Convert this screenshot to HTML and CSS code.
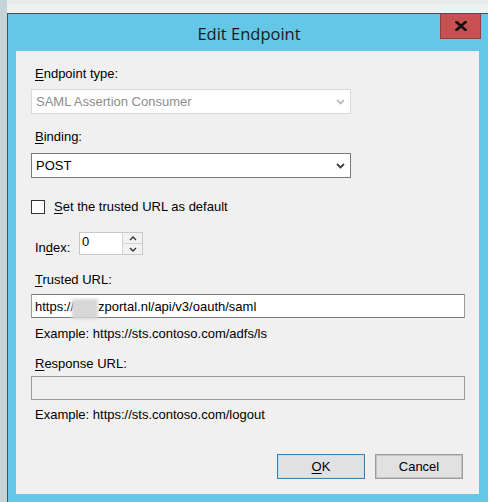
FILE: index.html
```html
<!DOCTYPE html>
<html lang="en">
<head>
<meta charset="utf-8">
<title>Edit Endpoint</title>
<link rel="stylesheet" href="styles.css">
</head>
<body>
<div class="desk">
  <div class="desk-edge"></div>
  <div class="desk-main">
    <div class="desk-top"></div>
    <div class="window">
      <div class="titlebar">
        <span class="title">Edit Endpoint</span>
        <button class="close" aria-label="Close">
          <svg width="12" height="10" viewBox="0 0 12 10"><path d="M1.5 1 L10.5 9 M10.5 1 L1.5 9" stroke="#111" stroke-width="2.6" stroke-linecap="square" fill="none"/></svg>
        </button>
      </div>
      <div class="client">
        <div class="label first"><u>E</u>ndpoint type:</div>
        <div class="combo disabled">
          <span class="combo-text">SAML Assertion Consumer</span>
          <svg class="chev" width="9" height="6" viewBox="0 0 9 6"><path d="M1 1 L4.5 4.5 L8 1" stroke="#b4b4b4" stroke-width="1.6" fill="none"/></svg>
        </div>
        <div class="label second"><u>B</u>inding:</div>
        <div class="combo">
          <span class="combo-text">POST</span>
          <svg class="chev" width="9" height="6" viewBox="0 0 9 6"><path d="M1 1 L4.5 4.5 L8 1" stroke="#404040" stroke-width="1.8" fill="none"/></svg>
        </div>
        <div class="check-row">
          <span class="check-box"></span>
          <span class="check-text"><u>S</u>et the trusted URL as default</span>
        </div>
        <div class="index-row">
          <span class="index-label">In<u>d</u>ex:</span>
          <div class="spin">
            <span class="spin-value">0</span>
            <div class="spin-btns">
              <span class="spin-btn"><svg width="8" height="5" viewBox="0 0 8 5"><path d="M1 4 L4 1 L7 4" stroke="#333" stroke-width="1.4" fill="none"/></svg></span>
              <span class="spin-btn"><svg width="8" height="5" viewBox="0 0 8 5"><path d="M1 1 L4 4 L7 1" stroke="#333" stroke-width="1.4" fill="none"/></svg></span>
            </div>
          </div>
        </div>
        <div class="label trusted"><u>T</u>rusted URL:</div>
        <div class="textbox">https://<span class="redact"></span>zportal.nl/api/v3/oauth/saml</div>
        <div class="hint">Example: https://sts.contoso.com/adfs/ls</div>
        <div class="label response"><u>R</u>esponse URL:</div>
        <div class="textbox disabled"></div>
        <div class="hint last">Example: https://sts.contoso.com/logout</div>
        <div class="buttons">
          <button class="btn default"><u>O</u>K</button>
          <button class="btn">Cancel</button>
        </div>
      </div>
    </div>
  </div>
</div>
</body>
</html>
```

FILE: styles.css
```css
* { box-sizing: border-box; }

html, body {
  margin: 0;
  padding: 0;
}

body {
  width: 488px;
  height: 502px;
  overflow: hidden;
  font-family: "Liberation Sans", Arial, sans-serif;
  font-size: 13px;
  color: #000;
}

u { text-decoration: underline; text-underline-offset: 2px; text-decoration-thickness: 1px; }

/* desktop strips around the dialog */
.desk {
  display: flex;
  height: 502px;
}

.desk-edge {
  width: 7px;
  background: #c6d3d7;
  flex: none;
}

.desk-main {
  flex: 1;
  display: flex;
  flex-direction: column;
  min-width: 0;
}

.desk-top {
  height: 13px;
  flex: none;
  background: #eff1f1;
  border-top: 4px solid #e8ebeb;
}

/* dialog frame */
.window {
  flex: 1;
  min-height: 0;
  display: flex;
  flex-direction: column;
  background: #64c7e8;
  border-top: 1px solid #46535b;
  border-left: 1px solid #46535b;
}

.titlebar {
  position: relative;
  height: 37px;
  flex: none;
  display: flex;
  align-items: center;
  justify-content: center;
  padding-left: 2px;
}

.title {
  font-family: "Open Sans", "Noto Sans", sans-serif;
  font-size: 16.5px;
  color: #1a1a1a;
  margin-top: 1px;
}

.close {
  position: absolute;
  top: 0;
  right: 7px;
  width: 41px;
  height: 25px;
  margin: 0;
  padding: 0;
  background: #c75050;
  border: 1px solid #8e4040;
  border-top: none;
  display: flex;
  align-items: center;
  justify-content: center;
}

/* client area */
.client {
  flex: 1;
  min-height: 0;
  overflow: hidden;
  margin: 0 9px 8px 8px;
  background: #f0f0f0;
  padding: 15px 14px 0 15px;
  display: flex;
  flex-direction: column;
  align-items: flex-start;
}

.label {
  line-height: 15px;
  padding-left: 4px;
}

.label.first { margin-bottom: 8px; }
.label.second { margin-top: 15px; margin-bottom: 9px; }
.label.trusted { margin-top: 17px; margin-bottom: 7px; }
.label.response { margin-top: 15px; margin-bottom: 5px; }

.combo {
  width: 320px;
  height: 25px;
  flex: none;
  background: #fff;
  border: 1px solid #7a7a7a;
  display: flex;
  align-items: center;
  justify-content: space-between;
  padding: 0 5px 0 4px;
}

.combo.disabled {
  border-color: #d9d9d9;
  color: #8d8d8d;
}

.chev { flex: none; }

.check-row {
  display: flex;
  align-items: center;
  margin-top: 21px;
  height: 15px;
}

.check-box {
  width: 14px;
  height: 14px;
  background: #fff;
  border: 1px solid #333;
  margin-right: 9px;
}

.index-row {
  display: flex;
  align-items: flex-start;
  margin-top: 18px;
}

.index-label {
  padding-left: 4px;
  width: 48px;
  margin-top: 8px;
  line-height: 15px;
}

.spin {
  width: 64px;
  height: 23px;
  display: flex;
  background: #fff;
  border: 1px solid #c8c8c8;
}

.spin-value {
  flex: 1;
  padding: 1px 0 0 2px;
  line-height: 15px;
}

.spin-btns {
  width: 20px;
  display: flex;
  flex-direction: column;
  border-left: 1px solid #d4d4d4;
}

.spin-btn {
  flex: 1;
  display: flex;
  align-items: center;
  justify-content: center;
  background: #f2f2f2;
}

.spin-btn + .spin-btn { border-top: 1px solid #d4d4d4; }

.textbox {
  width: 434px;
  height: 24px;
  flex: none;
  background: #fff;
  border: 1px solid #7a7a7a;
  border-left-color: #9c9c9c;
  border-right-color: #9c9c9c;
  padding: 0 3px;
  display: flex;
  align-items: center;
  white-space: pre;
}

.textbox.disabled {
  background: #f0f0f0;
  border-color: #999;
}

.redact {
  display: inline-block;
  width: 26px;
  height: 20px;
  margin: 0 0 -6px -2px;
  background: #d7d7d7;
  filter: blur(1.5px);
}

.hint {
  padding-left: 4px;
  line-height: 15px;
  margin-top: 8px;
}

.hint.last { margin-top: 7px; }

.buttons {
  align-self: flex-end;
  display: flex;
  gap: 10px;
  margin-top: 32px;
  margin-right: 2px;
}

.btn {
  width: 88px;
  height: 25px;
  margin: 0;
  padding: 0;
  font-family: "Liberation Sans", Arial, sans-serif;
  font-size: 13px;
  color: #000;
  background: #e1e1e1;
  border: 1px solid #9b9b9b;
  box-shadow: inset 0 0 0 1px #c4c4c4;
}

.btn.default {
  border-color: #3c7fb1;
  box-shadow: inset 0 0 0 1px #c7dcec;
}
```
